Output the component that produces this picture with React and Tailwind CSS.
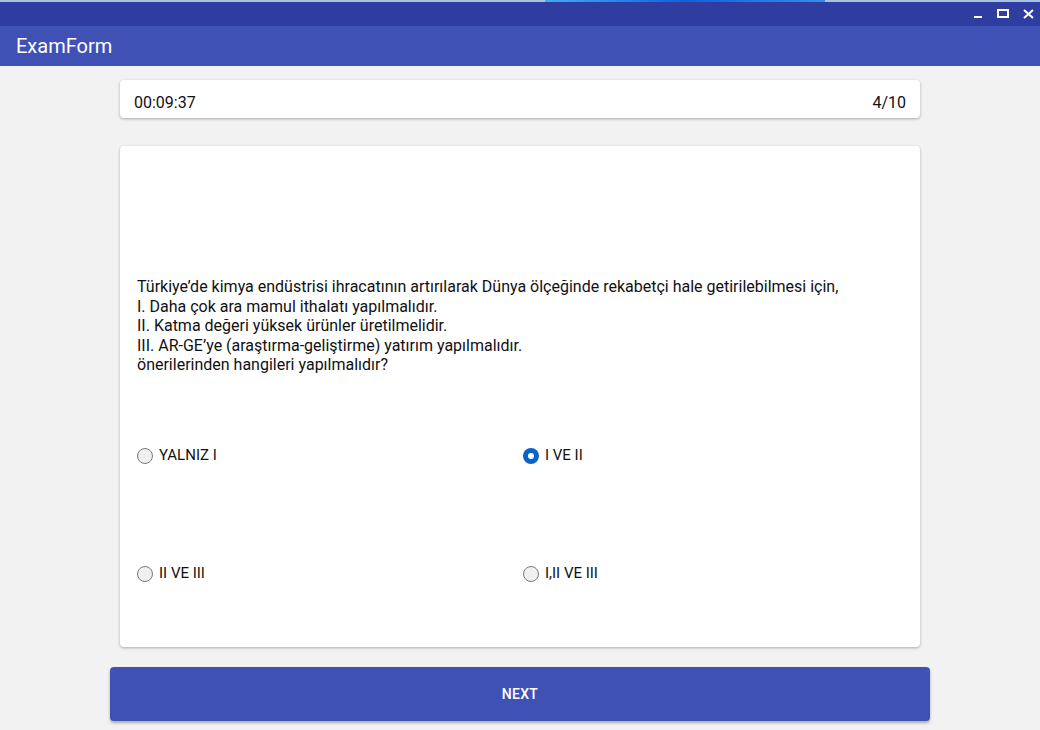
import React from "react";

function Radio({ checked }) {
  if (checked) {
    return (
      <span className="w-[16px] h-[16px] rounded-full bg-[#0a64c8] flex items-center justify-center shrink-0">
        <span className="w-[6px] h-[6px] rounded-full bg-white" />
      </span>
    );
  }
  return (
    <span className="w-[16px] h-[16px] rounded-full border border-[#7a7a7a] bg-[#f0f0f0] shrink-0" />
  );
}

function Option({ label, checked }) {
  return (
    <div className="flex items-center gap-[6px] h-[20px]">
      <Radio checked={checked} />
      <span className="text-[15px] text-[#111]">{label}</span>
    </div>
  );
}

export default function App() {
  return (
    <div
      className="w-[1040px] h-[730px] bg-[#f2f2f2] flex flex-col overflow-hidden"
      style={{ fontFamily: "Roboto, 'Liberation Sans', sans-serif" }}
    >
      <div className="h-[2px] bg-[#a8c3e2] flex shrink-0">
        <div className="ml-[545px] w-[280px] h-full bg-gradient-to-r from-[#4aa8f0] via-[#1060e0] to-[#3a8ae8]" />
      </div>
      <div className="h-[24px] bg-[#2e3d9f] flex items-center justify-end pr-[6px] gap-[14px] shrink-0">
        <svg width="9" height="10" viewBox="0 0 9 10">
          <rect x="0" y="7" width="8" height="2" fill="#fff" />
        </svg>
        <svg width="12" height="10" viewBox="0 0 12 10">
          <rect x="1" y="1" width="10" height="7" fill="none" stroke="#fff" strokeWidth="2" />
        </svg>
        <svg width="11" height="10" viewBox="0 0 11 10">
          <path d="M1 1 L10 9 M10 1 L1 9" stroke="#fff" strokeWidth="2" />
        </svg>
      </div>
      <div className="h-[40px] bg-[#3f51b5] flex items-center px-[16px] shrink-0">
        <span className="text-white text-[20px]">ExamForm</span>
      </div>

      <div className="flex flex-col items-center pt-[14px]">
        <div className="w-[800px] h-[38px] bg-white rounded-[4px] shadow-[0_1px_3px_rgba(0,0,0,0.3)] flex items-center justify-between px-[14px] pt-[8px] text-[16px] text-[#111]">
          <span>00:09:37</span>
          <span>4/10</span>
        </div>

        <div className="mt-[28px] w-[800px] h-[501px] bg-white rounded-[4px] shadow-[0_1px_3px_rgba(0,0,0,0.3)] px-[17px] flex flex-col">
          <div className="mt-[131px] text-[16px] leading-[19.5px] text-[#111]">
            <div>Türkiye’de kimya endüstrisi ihracatının artırılarak Dünya ölçeğinde rekabetçi hale getirilebilmesi için,</div>
            <div>I. Daha çok ara mamul ithalatı yapılmalıdır.</div>
            <div>II. Katma değeri yüksek ürünler üretilmelidir.</div>
            <div>III. AR-GE’ye (araştırma-geliştirme) yatırım yapılmalıdır.</div>
            <div>önerilerinden hangileri yapılmalıdır?</div>
          </div>
          <div className="mt-[71px] grid grid-cols-[386px_1fr] gap-y-[98px]">
            <Option label="YALNIZ I" />
            <Option label="I VE II" checked />
            <Option label="II VE III" />
            <Option label="I,II VE III" />
          </div>
        </div>

        <button className="mt-[20px] w-[820px] h-[54px] bg-[#3f51b5] rounded-[4px] shadow-[0_2px_3px_rgba(0,0,0,0.3)] text-white text-[14px] font-medium tracking-[0.3px]">
          NEXT
        </button>
      </div>
    </div>
  );
}
